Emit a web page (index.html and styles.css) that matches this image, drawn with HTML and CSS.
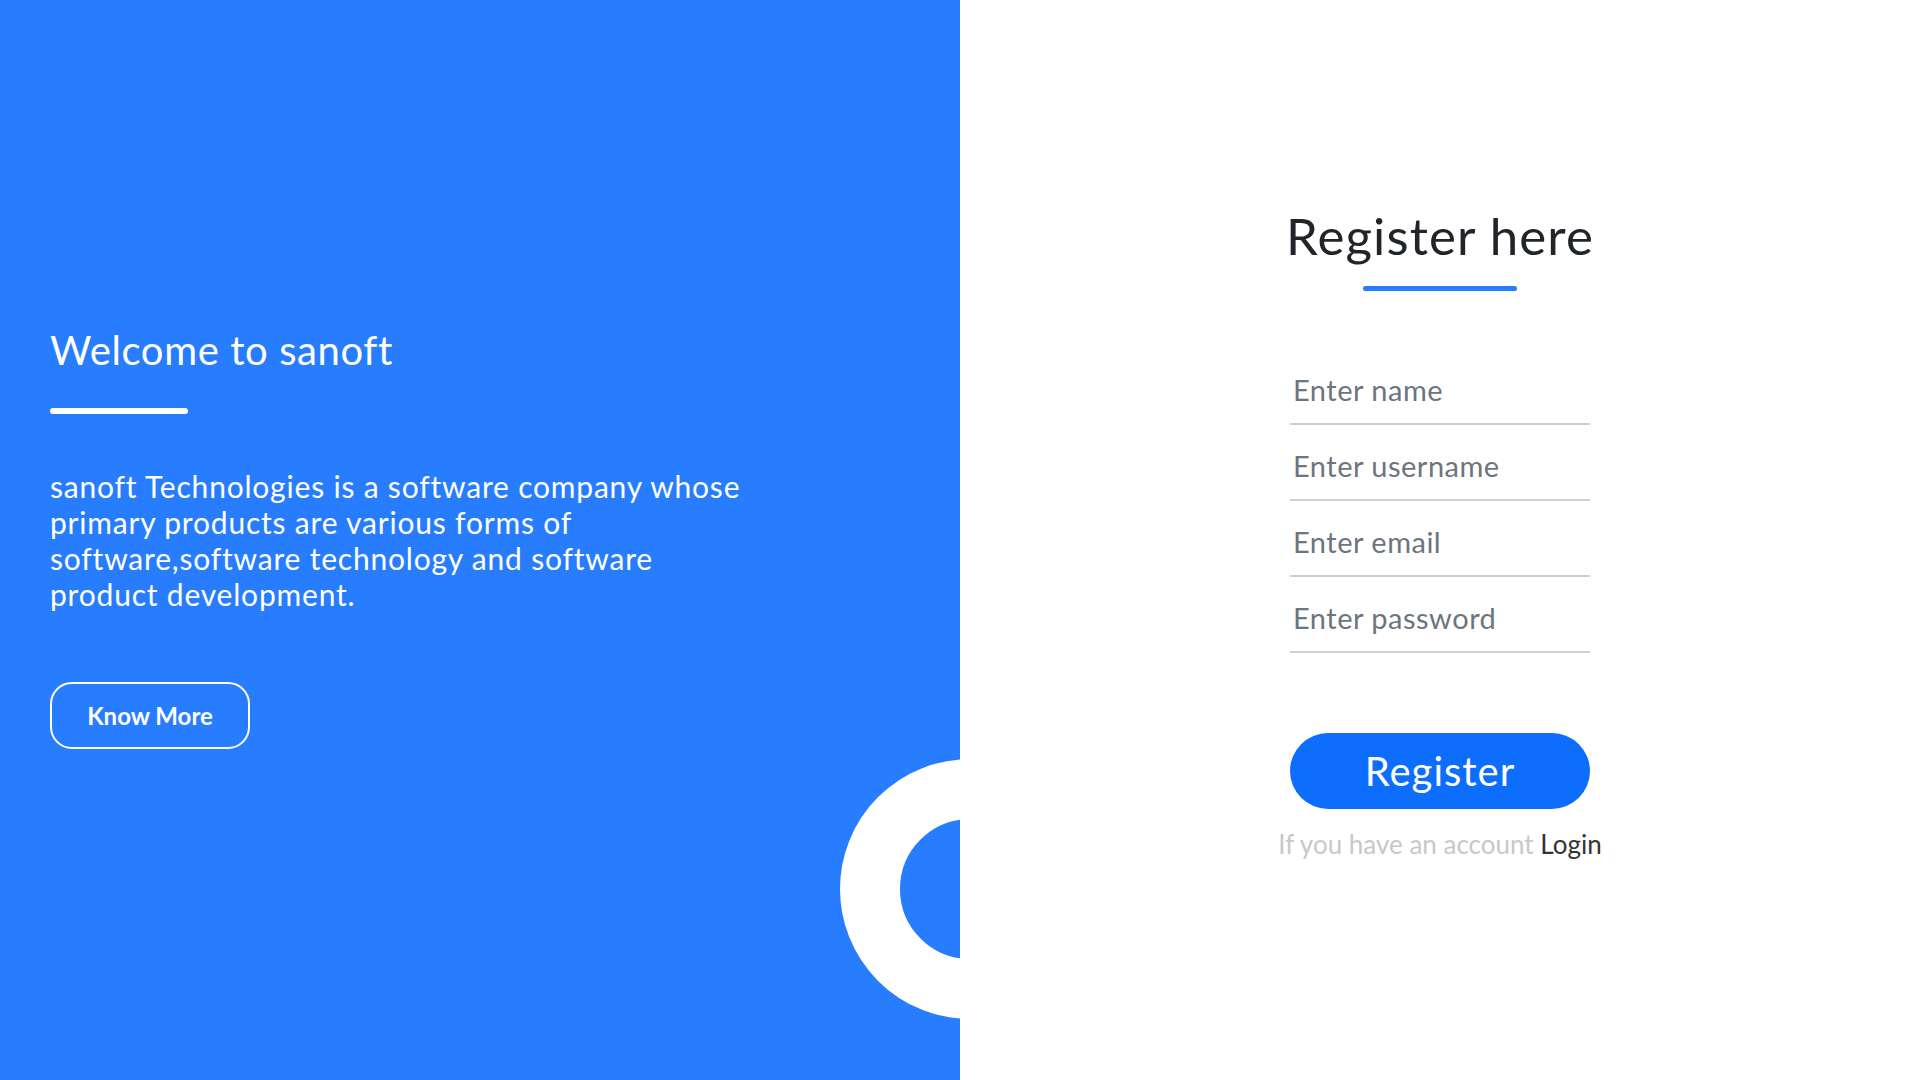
FILE: index.html
```html
<!DOCTYPE html>
<html lang="en">
<head>
<meta charset="utf-8">
<title>sanoft - Register</title>
<link rel="stylesheet" href="styles.css">
</head>
<body>
<main class="page">
  <section class="intro">
    <div class="intro-content">
      <h1 class="intro-title">Welcome to sanoft</h1>
      <div class="intro-bar"></div>
      <p class="intro-text">sanoft Technologies is a software company whose<br>primary products are various forms of<br>software,software technology and software<br>product development.</p>
      <a class="know-btn" href="#">Know More</a>
    </div>
    <div class="ring"></div>
  </section>
  <section class="register">
    <form class="reg-form" onsubmit="return false">
      <h2 class="reg-title">Register here</h2>
      <div class="reg-bar"></div>
      <input class="field" type="text" placeholder="Enter name">
      <input class="field" type="text" placeholder="Enter username">
      <input class="field" type="email" placeholder="Enter email">
      <input class="field" type="password" placeholder="Enter password">
      <button class="reg-btn" type="submit">Register</button>
      <p class="reg-note">If you have an account <a href="#" class="login-link">Login</a></p>
    </form>
  </section>
</main>
</body>
</html>
```
FILE: styles.css
```css
* { box-sizing: border-box; }
html, body { margin: 0; padding: 0; }
body {
  font-family: Lato, "Open Sans", sans-serif;
  background: #ffffff;
}
.page {
  display: flex;
  width: 1920px;
  height: 1080px;
}
.intro {
  position: relative;
  width: 960px;
  height: 1080px;
  background: #287dff;
  overflow: hidden;
  display: flex;
  flex-direction: column;
  justify-content: center;
  padding: 0 0 5px 50px;
}
.intro-content {
  display: flex;
  flex-direction: column;
  align-items: flex-start;
  position: relative;
  z-index: 1;
}
.intro-title {
  margin: 0;
  font-size: 40px;
  line-height: 48px;
  font-weight: 400;
  letter-spacing: 0.6px;
  color: #ffffff;
}
.intro-bar {
  width: 138px;
  height: 6px;
  border-radius: 3px;
  background: #ffffff;
  margin-top: 34px;
}
.intro-text {
  margin: 54px 0 0;
  font-size: 30px;
  line-height: 36px;
  letter-spacing: 0.8px;
  color: #ffffff;
}
.know-btn {
  margin-top: 70px;
  width: 200px;
  height: 67px;
  border: 2px solid #ffffff;
  border-radius: 22px;
  display: flex;
  align-items: center;
  justify-content: center;
  color: #ffffff;
  font-weight: 700;
  font-size: 24px;
  text-decoration: none;
}
.ring {
  position: absolute;
  left: 840px;
  top: 759px;
  width: 260px;
  height: 260px;
  border: 60px solid #ffffff;
  border-radius: 50%;
  background: #287dff;
}
.register {
  width: 960px;
  height: 1080px;
  background: #ffffff;
  display: flex;
  justify-content: center;
  align-items: center;
  padding-bottom: 14px;
}
.reg-form {
  width: 300px;
  display: flex;
  flex-direction: column;
  align-items: center;
}
.reg-title {
  margin: 0;
  font-size: 51px;
  line-height: 60px;
  font-weight: 400;
  letter-spacing: 1.1px;
  color: #212529;
  white-space: nowrap;
}
.reg-bar {
  width: 154px;
  height: 5px;
  border-radius: 3px;
  background: #287dff;
  margin-top: 20px;
  margin-bottom: 72px;
}
.field {
  width: 300px;
  height: 62px;
  border: none;
  border-bottom: 2px solid #cfcfcf;
  padding: 0 2px 7px 3px;
  margin: 0 0 14px;
  font-family: inherit;
  font-size: 29px;
  letter-spacing: 0.5px;
  color: #333;
  background: transparent;
  outline: none;
}
.field::placeholder { color: #6c757d; }
.reg-btn {
  margin-top: 66px;
  width: 300px;
  height: 76px;
  border: none;
  border-radius: 38px;
  background: #0d6efd;
  color: #ffffff;
  font-family: inherit;
  font-size: 40px;
  letter-spacing: 1px;
  cursor: pointer;
}
.reg-note {
  margin: 19px 0 0;
  font-size: 26px;
  line-height: 32px;
  color: #c8c8c8;
  white-space: nowrap;
}
.login-link {
  color: #333333;
  text-decoration: none;
}
```
